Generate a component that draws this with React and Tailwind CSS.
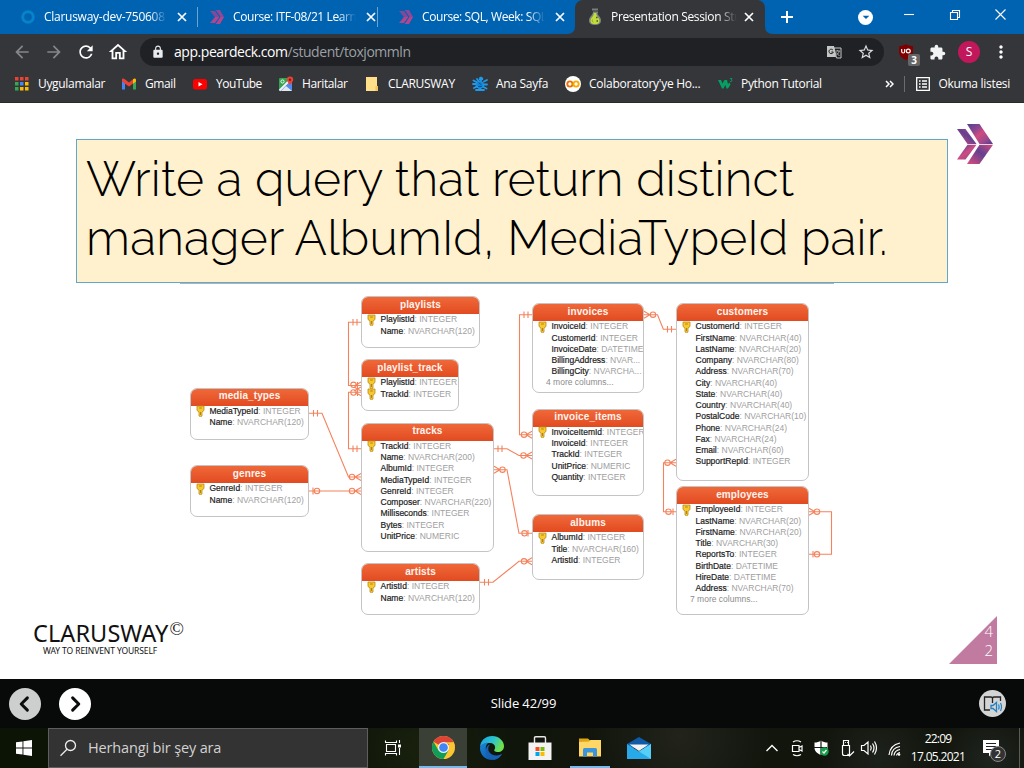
import React from "react";
import { MdArrowBack, MdArrowForward, MdRefresh, MdOutlineHome, MdLock, MdStarBorder, MdExtension, MdMoreVert, MdArrowDropDown } from "react-icons/md";

const UI = "font-['Open_Sans','Noto_Sans',sans-serif]";

function CloseX({ className = "" }) {
  return (
    <svg viewBox="0 0 10 10" className={`size-[10px] shrink-0 ${className}`} stroke="#fff" strokeWidth="1.7">
      <path d="M1 1l8 8M9 1l-8 8" />
    </svg>
  );
}

function Chevrons({ className }) {
  return (
    <svg viewBox="0 0 36 40" className={className}>
      <defs>
        <linearGradient id="cwA" x1="0" y1="0" x2="1" y2="1">
          <stop offset="0" stopColor="#54408f" />
          <stop offset=".3" stopColor="#8a4790" />
          <stop offset=".5" stopColor="#d04b80" />
          <stop offset=".75" stopColor="#a04a8c" />
          <stop offset="1" stopColor="#4b3b92" />
        </linearGradient>
        <linearGradient id="cwB" x1="1" y1="0" x2="0" y2="1">
          <stop offset="0" stopColor="#d04b80" />
          <stop offset=".45" stopColor="#64408f" />
          <stop offset="1" stopColor="#dd4c7c" />
        </linearGradient>
      </defs>
      <path d="M10 0h12.500L36 20H22.500z" fill="url(#cwA)" />
      <path d="M10 40h12.500L36 20.700H22.500z" fill="url(#cwB)" />
      <path d="M0 5h8.500L19.500 20H10.500z" fill="url(#cwB)" />
      <path d="M0 35.500h8.500L19.500 20.700H10.500z" fill="url(#cwA)" />
    </svg>
  );
}

function TabChevrons() {
  return (
    <svg viewBox="0 0 16 16" className="size-4">
      <path d="M1 2h5l4.500 6H6z" fill="#7f4a9b" />
      <path d="M6 8h4.500L6 14H1z" fill="#b04590" />
      <path d="M6.500 1h4.500l4 7h-3.800z" fill="#8f4797" />
      <path d="M11.200 8H15l-4 7H6.500z" fill="#b8458c" />
      <path d="M6.500 1.300L11 8l-4.500 6.700" fill="none" stroke="#0063b1" strokeWidth=".8" />
    </svg>
  );
}

function Pear() {
  return (
    <svg viewBox="0 0 16 18" className="h-[18px] w-4">
      <path d="M5 1.500h6M6 4.500h5" stroke="#77807a" strokeWidth="2" />
      <path d="M6 4h4c0 3 4 4.500 4 8.500C14 16 11 17 8 17s-6-1-6-4.500C2 8.500 6 7 6 4z" fill="#7d8583" />
      <path d="M6.800 5h2.400c0 4 3.300 4.500 3.300 7.500S10.500 16 8 16s-4.500-.5-4.500-3.500S6.800 9 6.800 5z" fill="#c3dc3b" />
      <path d="M9 9.500h1.500M9.500 13H11" stroke="#3e5a1f" strokeWidth="1.300" />
      <path d="M5.500 11.500c-.6 1.500 0 2.500.8 3" stroke="#7fae2c" fill="none" />
    </svg>
  );
}

function Tab({ icon, title, tracking, divider }) {
  return (
    <div className="flex h-full w-[189px] shrink-0 items-center pl-[20px]">
      <span className="flex w-4 justify-center">{icon}</span>
      <span className={`ml-2 w-[123px] overflow-hidden whitespace-nowrap text-[12px] text-white [mask-image:linear-gradient(to_right,#000_86%,transparent)] ${tracking}`}>{title}</span>
      <CloseX className="ml-[10px]" />
      <span className={`ml-auto h-5 w-px ${divider ? "bg-[#6ba3d2]" : ""}`} />
    </div>
  );
}

function TabStrip() {
  return (
    <div className="flex h-[34px] items-center bg-[#0063b1]">
      <div className="flex h-full w-[198px] shrink-0">
        <Tab
          icon={<svg viewBox="0 0 16 16" className="size-4"><circle cx="8" cy="8" r="5.300" fill="none" stroke="#0583cb" strokeWidth="3" /></svg>}
          title="Clarusway-dev-750608 -"
          tracking="tracking-[-0.27px]"
        />
      </div>
      <div className="-ml-px h-5 w-px bg-[#6ba3d2]" />
      <div className="-ml-[9px] flex h-full">
        <Tab icon={<TabChevrons />} title="Course: ITF-08/21 Learn" tracking="tracking-[-0.4px]" divider />
        <Tab icon={<TabChevrons />} title="Course: SQL, Week: SQL" tracking="tracking-[-0.4px]" />
      </div>
      <div className="relative ml-[8px] flex h-full w-[190px] shrink-0 items-center rounded-t-lg bg-[#35363a] pl-[12px]">
        <svg viewBox="0 0 8 8" className="absolute bottom-0 -left-2 size-2"><path d="M8 0v8H0q8 0 8-8z" fill="#35363a" /></svg>
        <svg viewBox="0 0 8 8" className="absolute -right-2 bottom-0 size-2"><path d="M0 0v8h8q-8 0-8-8z" fill="#35363a" /></svg>
        <Pear />
        <span className="ml-2 w-[126px] overflow-hidden whitespace-nowrap text-[12px] tracking-[-0.34px] text-white [mask-image:linear-gradient(to_right,#000_84%,transparent)]">Presentation Session Student</span>
        <CloseX className="ml-[7px]" />
      </div>
      <svg viewBox="0 0 12 12" className="ml-[16px] size-3 shrink-0" stroke="#fff" strokeWidth="2"><path d="M6 0v12M0 6h12" /></svg>
      <span className="ml-auto flex size-[15px] items-center justify-center rounded-full bg-white">
        <MdArrowDropDown className="size-4 shrink-0 text-[#0063b1]" />
      </span>
      <svg viewBox="0 0 104 14" className="mr-[16px] mb-[6px] ml-[31px] h-[14px] w-[104px] shrink-0" fill="none" stroke="#fff" strokeWidth="1.100">
        <path d="M0 7.500h10" />
        <path d="M46.500 5.500h7v7h-7zM48.500 5.500v-2h7v7h-2" />
        <path d="M91.500 2.500l10 10M101.500 2.500l-10 10" />
      </svg>
    </div>
  );
}

function Toolbar() {
  return (
    <div className="flex h-9 items-center bg-[#35363a] pr-[14px] pl-[12px] text-white">
      <MdArrowBack className="size-5 text-[#86878a]" />
      <MdArrowForward className="ml-3 size-5 text-[#86878a]" />
      <MdRefresh className="ml-3 size-5" />
      <MdOutlineHome className="ml-[11px] size-[22px]" />
      <div className="ml-[11px] flex h-7 w-[744px] shrink-0 items-center rounded-full bg-[#202124] pr-[9px] pl-[11px]">
        <MdLock className="size-[14px] text-[#e8eaed]" />
        <span className="ml-[9px] pb-px text-[14px] whitespace-nowrap text-[#9aa0a6]">
          <span className="tracking-[-0.45px] text-white">app.peardeck.com</span>
          <span className="tracking-[-0.460px]">/student/toxjommln</span>
        </span>
        <span className="ml-auto flex w-[15px] items-center">
          <svg viewBox="0 0 15 14" className="h-[14px] w-[15px]">
            <path d="M0 1h7l2 11H0z" fill="#c4c7c5" />
            <path d="M7 3h7v10H9.500z" fill="none" stroke="#c4c7c5" />
            <path d="M6 5.200a2.200 2.200 0 1 0 .3 1.800H4.300" fill="none" stroke="#202124" />
            <path d="M8.500 6H13M10.700 5v1M12.300 6c-.5 2-1.500 3-3 4M9.500 7.500c.6 1.500 1.500 2.500 3 3" fill="none" stroke="#c4c7c5" strokeWidth=".8" />
          </svg>
        </span>
        <MdStarBorder className="ml-[15px] size-[18px] text-[#dadce0]" />
      </div>
      <span className="relative ml-[14px] flex size-4 items-center justify-center">
        <svg viewBox="0 0 16 16" className="size-4">
          <path d="M8 0c2 1.500 4.500 2 7 2v6c0 4-3.500 6.500-7 8-3.500-1.500-7-4-7-8V2c2.500 0 5-.5 7-2z" fill="#800000" />
          <path d="M3.700 5v2.500q0 1.500 1.500 1.500t1.500-1.500V5" fill="none" stroke="#fff" strokeWidth="1.200" />
          <circle cx="10.300" cy="7" r="1.900" fill="none" stroke="#fff" strokeWidth="1.200" />
        </svg>
        <span className={`absolute top-[10px] left-[10px] flex h-3 w-3 items-center justify-center rounded-[2px] bg-[#666] text-[10px] font-bold ${UI}`}>3</span>
      </span>
      <MdExtension className="ml-[15px] size-[17px] shrink-0 text-[#f1f3f4]" />
      <span className="ml-[12px] flex size-[22px] shrink-0 items-center justify-center rounded-full bg-[#c2185b] text-[12px]">S</span>
      <MdMoreVert className="-mr-[4px] ml-[11px] size-5 shrink-0" />
    </div>
  );
}

const bookmarks = [
  { label: "Uygulamalar", box: "w-[107px]", tracking: "tracking-[-0.32px]", icon: "apps" },
  { label: "Gmail", box: "w-[71px]", tracking: "tracking-[-0.4px]", icon: "gmail" },
  { label: "YouTube", box: "w-[86px]", tracking: "tracking-[-0.5px]", icon: "youtube" },
  { label: "Haritalar", box: "w-[86px]", tracking: "tracking-[-0.38px]", icon: "maps" },
  { label: "CLARUSWAY", box: "w-[108px]", tracking: "tracking-[-0.3px]", icon: "folder" },
  { label: "Ana Sayfa", box: "w-[93px]", tracking: "tracking-[-0.3px]", icon: "figure" },
  { label: "Colaboratory'ye Ho...", box: "w-[152px]", tracking: "tracking-[-0.27px]", icon: "colab" },
  { label: "Python Tutorial", box: "w-[110px]", tracking: "tracking-[-0.33px]", icon: "w3" },
];

const appDots = ["#ea4335", "#ea4335", "#ea4335", "#34a853", "#4285f4", "#fbbc05", "#34a853", "#fbbc05", "#fbbc05"];

function BookmarkIcon({ name }) {
  return (
    <svg viewBox="0 0 16 16" className="size-4 shrink-0">
      {name === "apps" && appDots.map((c, i) => <rect key={i} x={1 + (i % 3) * 5} y={1 + Math.floor(i / 3) * 5} width="3.500" height="3.500" fill={c} />)}
      {name === "gmail" && (
        <g>
          <path d="M1 3.500v10h3V7z" fill="#4285f4" />
          <path d="M12 7v6.500h3v-10z" fill="#34a853" />
          <path d="M1 3.500C1 2.500 2.500 2 3.500 3L8 6.400 12 3.200V7.600L8 10.500 1 5.500z" fill="#ea4335" />
          <path d="M12 3.200c1.500-1.200 3-.7 3 .8v1.500l-3 2.200z" fill="#fbbc04" />
        </g>
      )}
      {name === "youtube" && (
        <g>
          <rect x="1" y="3" width="14" height="10.500" rx="2.500" fill="#f00" />
          <path d="M6.500 6v4.500l4-2.250z" fill="#fff" />
        </g>
      )}
      {name === "maps" && (
        <g>
          <rect x="1" y="2" width="13" height="13" rx="1" fill="#35a352" />
          <path d="M1 14L11 4l3 3v8H2z" fill="#4f8bf5" />
          <path d="M1.500 14.500L12 4" stroke="#f2f2f2" strokeWidth="2" />
          <path d="M3 15l5-5 6 5z" fill="#e4e6e8" />
          <circle cx="4.500" cy="5.500" r="1.600" fill="none" stroke="#fff" strokeWidth=".9" />
          <path d="M12 .5a3.200 3.200 0 0 1 3.200 3.200c0 2.300-2.400 3-3.200 6-.8-3-3.200-3.700-3.200-6A3.200 3.200 0 0 1 12 .5z" fill="#ea4335" />
          <circle cx="12" cy="3.800" r="1.200" fill="#8a1b12" />
        </g>
      )}
      {name === "folder" && (
        <g>
          <path d="M2 1h11v8.500l1 2V15H2z" fill="#ffe08a" />
          <path d="M11.500 10h2.500v5h-2.500z" fill="#f1c55a" />
        </g>
      )}
      {name === "figure" && (
        <g fill="none" stroke="#1e9bea" strokeLinecap="round">
          <path d="M4.500 6.500L8 5l3 1.500.5 4L8 13l-3.500-2z" fill="#1583d4" strokeWidth="1" />
          <circle cx="9" cy="2.800" r="1.700" fill="#1e9bea" />
          <path d="M1.500 4.500l3 1.500M1 8h3M2 12l3-1.500M12 5.500l3-1.500M12 8.500h3M11.500 11l3 1.500M5 3l1.500 2M4 14h8" strokeWidth="1.800" />
          <path d="M7 7l2 1.500M6.500 10.500h3" stroke="#0b4f95" strokeWidth="1" />
        </g>
      )}
      {name === "colab" && (
        <g>
          <circle cx="8" cy="8" r="8" fill="#fff" />
          <circle cx="4.900" cy="8" r="2.600" fill="none" stroke="#e8710a" strokeWidth="1.900" />
          <circle cx="11.100" cy="8" r="2.600" fill="none" stroke="#f9ab00" strokeWidth="1.900" />
        </g>
      )}
      {name === "w3" && (
        <g fill="none" stroke="#069e63">
          <path d="M1 4h3l1.500 3.500L7.500 4h2.500l1 4 1.500-1.500 1 2L11 12.500H9.500L8.300 9l-1.800 3.500H5z" fill="#069e63" stroke="none" />
          <path d="M13 2.500h2L14 4c1.500 0 1.300 2-1 1.500" strokeWidth=".9" />
        </g>
      )}
    </svg>
  );
}

function BookmarksBar() {
  return (
    <div className="flex h-[33px] items-center border-b border-[#28292b] bg-[#35363a] pr-[14px] pb-[5px] pl-[14px] text-[12px] whitespace-nowrap text-white">
      {bookmarks.map((b) => (
        <div key={b.label} className={`flex shrink-0 items-center gap-2 ${b.box}`}>
          <BookmarkIcon name={b.icon} />
          <span className={b.tracking}>{b.label}</span>
        </div>
      ))}
      <svg viewBox="0 0 9 8" className="ml-auto h-2 w-[9px]" fill="none" stroke="#fff" strokeWidth="1.500"><path d="M1 1l3 3-3 3M5 1l3 3-3 3" /></svg>
      <span className="ml-[10px] h-4 w-px bg-[#6b6c70]" />
      <svg viewBox="0 0 14 14" className="mr-2 ml-[11px] size-[14px]" fill="none" stroke="#fff" strokeWidth="1.300">
        <path d="M.7.700h12.600v12.600H.7zM3 4h1.600M6 4h5M3 7h1.600M6 7h5M3 10h1.600M6 10h5" />
      </svg>
      <span className="tracking-[-0.3px]">Okuma listesi</span>
    </div>
  );
}

const V = (n) => `NVARCHAR(${n})`;
const tables = [
  { name: "playlists", place: "left-[361px] top-[13px] w-[119px] h-[52px]", keys: 1, rows: [["PlaylistId", "INTEGER"], ["Name", V(120)]] },
  { name: "playlist_track", place: "left-[361px] top-[76px] w-[98px] h-[52px]", keys: 2, rows: [["PlaylistId", "INTEGER"], ["TrackId", "INTEGER"]] },
  { name: "media_types", place: "left-[190px] top-[104.500px] w-[119px] h-[52px]", keys: 1, rows: [["MediaTypeId", "INTEGER"], ["Name", V(120)]] },
  { name: "genres", place: "left-[190px] top-[182px] w-[119px] h-[52px]", keys: 1, rows: [["GenreId", "INTEGER"], ["Name", V(120)]] },
  { name: "tracks", place: "left-[361px] top-[139.500px] w-[133px] h-[129px]", keys: 1, rows: [["TrackId", "INTEGER"], ["Name", V(200)], ["AlbumId", "INTEGER"], ["MediaTypeId", "INTEGER"], ["GenreId", "INTEGER"], ["Composer", V(220)], ["Milliseconds", "INTEGER"], ["Bytes", "INTEGER"], ["UnitPrice", "NUMERIC"]] },
  { name: "artists", place: "left-[361px] top-[280px] w-[119px] h-[52px]", keys: 1, rows: [["ArtistId", "INTEGER"], ["Name", V(120)]] },
  { name: "invoices", place: "left-[532px] top-[20px] w-[112px] h-[90px]", keys: 1, rows: [["InvoiceId", "INTEGER"], ["CustomerId", "INTEGER"], ["InvoiceDate", "DATETIME"], ["BillingAddress", "NVAR..."], ["BillingCity", "NVARCHA..."]], more: "4 more columns..." },
  { name: "invoice_items", place: "left-[532px] top-[125.500px] w-[112px] h-[87px]", keys: 1, rows: [["InvoiceItemId", "INTEGER"], ["InvoiceId", "INTEGER"], ["TrackId", "INTEGER"], ["UnitPrice", "NUMERIC"], ["Quantity", "INTEGER"]] },
  { name: "albums", place: "left-[532px] top-[231px] w-[112px] h-[66px]", keys: 1, rows: [["AlbumId", "INTEGER"], ["Title", V(160)], ["ArtistId", "INTEGER"]] },
  { name: "customers", place: "left-[676px] top-[20px] w-[133px] h-[178px]", keys: 1, rows: [["CustomerId", "INTEGER"], ["FirstName", V(40)], ["LastName", V(20)], ["Company", V(80)], ["Address", V(70)], ["City", V(40)], ["State", V(40)], ["Country", V(40)], ["PostalCode", V(10)], ["Phone", V(24)], ["Fax", V(24)], ["Email", V(60)], ["SupportRepId", "INTEGER"]] },
  { name: "employees", place: "left-[676px] top-[203px] w-[133px] h-[129px]", keys: 1, rows: [["EmployeeId", "INTEGER"], ["LastName", V(20)], ["FirstName", V(20)], ["Title", V(30)], ["ReportsTo", "INTEGER"], ["BirthDate", "DATETIME"], ["HireDate", "DATETIME"], ["Address", V(70)]], more: "7 more columns..." },
];

function Key() {
  return (
    <svg viewBox="0 0 9 12" className="h-3 w-[9px] shrink-0">
      <path d="M1 1h7v4.500L6 7v4l-1.500.8L3 11V7L1 5.500z" fill="#f8c92c" stroke="#b98a1d" strokeWidth=".8" />
      <path d="M3.200 3h2.600M4.500 7v3" stroke="#a87b18" strokeWidth=".9" />
    </svg>
  );
}

function TableNode({ name, place, keys, rows, more }) {
  return (
    <div className={`absolute overflow-hidden rounded-[7px] border border-[#c4c4c4] bg-white ${place}`}>
      <div className="-mx-px -mt-px flex h-[18px] items-center justify-center bg-linear-to-b from-[#f06a3a] to-[#e24a20] pb-[2px] text-[10px] font-bold tracking-[0.1px] text-[#fff3ee]">{name}</div>
      {rows.map(([col, type], i) => (
        <div key={col} className="flex h-[11.250px] items-center text-[8.500px] whitespace-nowrap">
          <span className="flex w-[18.500px] shrink-0 justify-center">{i < keys && <Key />}</span>
          <span className="text-[#222] [-webkit-text-stroke:0.200px_#222]">{col}</span>
          <span className="text-[#a0a0a0]">: {type}</span>
        </div>
      ))}
      {more && <div className="h-[11.250px] pl-[13px] text-[8.500px] leading-[11.250px] text-[#8c8c8c]">{more}</div>}
    </div>
  );
}

const links = [
  "M361 39.300H348.500V102.500H361M353 36v6.500M357 36v6.500",
  "M361 165.700H348.500V109.300H361M353 162.500v6.500M357 162.500v6.500M357.500 99v14",
  "M355 102.500l6-3.500M355 109.300l6 3.500M354 104l7 4M354 108l7-4",
  "M309 130.300H322L348.500 194H361M313.500 127v6.500M317.500 127v6.500M355 194l6-3.500M355 194l6 3.500",
  "M309 208H361M313 204.500v7M355 208l6-3.500M355 208l6 3.500",
  "M494 165.700H507L519 172.500H532M498 162.500v6.500M502 162.500v6.500M526 172.500l6-3.500M526 172.500l6 3.500",
  "M494 186.700H507L519 250.300H532M500 186.700l-6-3.500M500 186.700l-6 3.500M528 247v6.500",
  "M480 299.300H493L519 278.300H532M484.500 296v6.500M488.500 296v6.500M526 278.300l6-3.500M526 278.300l6 3.500",
  "M532 31.700H519.500V151.700H532M524 28.500v6.500M528 28.500v6.500M526 151.700l6-3.500M526 151.700l6 3.500",
  "M644 31.700H657.500L663.300 46.300H676M667.500 43v6.500M671.500 43v6.500M650 31.700l-6-3.500M650 31.700l-6 3.500",
  "M676 179.700H663.500V228.700H676M670 179.700l6-3.500M670 179.700l6 3.500M673 225.500v6.500",
  "M809 228.700H831.500V271.300H809M815 228.700l-6-3.500M815 228.700l-6 3.500M813 268v6.500",
];
const rings = [[353.500, 101.800], [353.500, 109.500], [352, 194], [317, 208], [352, 208], [523.500, 172.500], [502.500, 186.700], [524.500, 250.300], [524, 278.300], [524, 151.700], [653, 31.700], [667.500, 179.700], [668.500, 228.700], [817, 228.700], [817, 271.300]];

function Diagram() {
  return (
    <div className="relative h-[333px] w-full font-['Liberation_Sans',Arial,sans-serif]">
      <div className="absolute top-0 left-[180px] h-px w-[654px] bg-[#b4b4b4]" />
      <svg viewBox="0 0 1024 333" className="absolute inset-0 h-[333px] w-[1024px]" fill="none" stroke="#f4825c" strokeWidth="1.100">
        {links.map((d) => <path key={d} d={d} />)}
        {rings.map(([x, y]) => <circle key={`${x}-${y}`} cx={x} cy={y} r="2.700" />)}
      </svg>
      {tables.map((t) => <TableNode key={t.name} {...t} />)}
    </div>
  );
}

function Slide() {
  return (
    <div className="flex h-[576px] flex-col bg-white">
      <div className="flex h-[180px] items-end pl-[76px]">
        <div className="flex h-[144px] w-[872px] flex-col border border-[#5fa8cc] bg-[#fff0ce] pt-[10px] pl-[9px] font-['Raleway','Lato',sans-serif] text-[48px] leading-[59px] font-light whitespace-nowrap text-black">
          <div className="tracking-[0.16px]">Write a query that return distinct</div>
          <div className="tracking-[0.24px]">manager AlbumId, MediaTypeId pair.</div>
        </div>
        <Chevrons className="mb-[119px] ml-[9px] h-10 w-9" />
      </div>
      <Diagram />
      <div className="flex h-[63px] items-start justify-between pr-[27px] pl-[33px]">
        <div className="font-['Noto_Sans','Open_Sans',sans-serif] text-[#111]">
          <div className="flex items-start pt-[4px]">
            <span className="text-[23.500px] leading-[26px] tracking-[0.080px]">CLARUSWAY</span>
            <span className="ml-px font-['Liberation_Serif',serif] text-[19px] leading-[18px]">©</span>
          </div>
          <div className="pl-[10px] text-[8.500px] leading-[9px] tracking-[-0.1px] whitespace-nowrap">WAY TO REINVENT YOURSELF</div>
        </div>
        <div className="flex h-12 w-12 flex-col items-end bg-[#c27ba0] pt-[6px] pr-[4px] font-['Open_Sans',sans-serif] text-[15px] leading-[19px] font-light text-white [clip-path:polygon(100%_0,100%_100%,0_100%)]">
          <span>4</span>
          <span>2</span>
        </div>
      </div>
    </div>
  );
}

function Player() {
  return (
    <div className="grid h-[49px] grid-cols-3 items-center bg-[#080a0a] pr-[18px] pl-[9px] text-white">
      <div className="flex gap-[17.500px]">
        {["M19 10.500l-6.500 6.500 6.500 6.500", "M14 10.500l6.500 6.500-6.500 6.500"].map((d, i) => (
          <span key={d} className={`flex size-8 items-center justify-center rounded-full ${i ? "bg-white" : "bg-[#cdcfce]"}`}>
            <svg viewBox="0 0 33 34" className="size-8" fill="none" stroke="#0b0d0d" strokeWidth="3.200" strokeLinecap="round" strokeLinejoin="round"><path d={d} /></svg>
          </span>
        ))}
      </div>
      <span className="pl-[32px] text-center text-[13px] tracking-[-0.120px]">Slide 42/99</span>
      <span className="flex size-[27px] items-center justify-center justify-self-end rounded-full bg-[#d4d4d4]">
        <svg viewBox="0 0 20 18" className="h-[18px] w-5" fill="none">
          <path d="M7 15H1.500V2H8q1.500 0 1.500 1.500V8M9.500 3.500Q9.500 2 11 2h6.500v4" stroke="#222" strokeWidth="1.300" />
          <path d="M8 10.500h2l3.500-3v9l-3.500-3H8z" stroke="#2181c4" strokeWidth="1.300" />
          <path d="M15.500 9.500q1.200 2.500 0 5M17.500 8q2 4 0 8" stroke="#2181c4" strokeWidth="1.200" />
        </svg>
      </span>
    </div>
  );
}

function ChromeLogo() {
  return (
    <svg viewBox="0 0 48 48" className="size-[23px]">
      <circle cx="24" cy="24" r="24" fill="#fbc62f" />
      <path d="M24 24L3.200 12A24 24 0 0 1 44.800 12z" fill="#db4437" />
      <path d="M44.800 12H24v12z" fill="#db4437" />
      <path d="M3.200 12A24 24 0 0 0 24 48L34.400 30 24 24 13.600 30z" fill="#109d58" />
      <path d="M24 13h20.800q2 3.500 2.800 8z" fill="#fbc62f" />
      <circle cx="24" cy="24" r="11.500" fill="#f1f1f1" />
      <circle cx="24" cy="24" r="9" fill="#4285f4" />
    </svg>
  );
}

function EdgeLogo() {
  return (
    <svg viewBox="0 0 24 24" className="size-6">
      <defs>
        <linearGradient id="edgeTop" x1="0" y1="0" x2="1" y2=".4"><stop offset="0" stopColor="#1e9de0" /><stop offset=".55" stopColor="#29c3d2" /><stop offset="1" stopColor="#6fe04d" /></linearGradient>
        <linearGradient id="edgeLow" x1="0" y1="0" x2="1" y2="1"><stop offset="0" stopColor="#1b86d8" /><stop offset="1" stopColor="#0d4c9a" /></linearGradient>
      </defs>
      <path d="M0 12C0 4 6 0 12 0c7 0 12 5 12 10 0 4-3 6-6 6s-4.500-1.200-3.500-2.500c1.500-2 .5-6-4-6.500C5 6.500 0 9 0 12z" fill="url(#edgeTop)" />
      <path d="M0 12c0-3 4-5.500 8.500-5.200C6 8.500 5 12 6.500 15.500c2 4.500 8 6 14.500 3.300C19 22 15.500 24 12 24 5 24 0 18.500 0 12z" fill="url(#edgeLow)" />
      <path d="M10 8.500c-3 3-2 8 2 10 3 1.500 7 1.300 10-.8-1 3.300-5 6-8.500 6C8 22.500 5 18 6 13c.5-2.500 2-4 4-4.500z" fill="#1561b5" />
    </svg>
  );
}

function Taskbar() {
  return (
    <div className="flex h-10 items-stretch bg-[#0c0f08] bg-[radial-gradient(circle_at_880px_28px,#1d211b_0,transparent_60px),radial-gradient(circle_at_990px_30px,#20241f_0,transparent_50px),radial-gradient(circle_at_680px_8px,#22241c_0,transparent_90px),radial-gradient(circle_at_420px_20px,#18200d_0,transparent_90px),linear-gradient(to_right,#0b1405,#11150c_60%,#11150d)] text-white">
      <div className="flex w-12 shrink-0 items-center justify-center">
        <svg viewBox="0 0 16 16" className="size-4" fill="#fff"><path d="M0 2.300L6.500 1.400v6.200H0zM7.400 1.300L16 0v7.600H7.400zM0 8.400h6.500v6.200L0 13.700zM7.400 8.400H16V16l-8.600-1.300z" /></svg>
      </div>
      <div className="flex w-80 shrink-0 items-center border border-[#5e5e5e] bg-[#333] pl-[10px]">
        <svg viewBox="0 0 18 18" className="size-[18px]" fill="none" stroke="#eee" strokeWidth="1.300"><circle cx="11.500" cy="6.500" r="5" /><path d="M8 10.200L1.500 16.700" /></svg>
        <span className="ml-[11px] text-[14.500px] tracking-[-0.15px] text-[#d2d2d2]">Herhangi bir şey ara</span>
      </div>
      <div className="flex w-[51px] shrink-0 items-center justify-center pl-[1px]">
        <svg viewBox="0 0 18 18" className="mr-[3px] size-[18px]" fill="none" stroke="#fff" strokeWidth="1.100"><path d="M2.500 5.500h9v7h-9zM1.500 1.500v2h11v-2M1.500 16.500v-2h11v2M15.500 1v3M15.500 9v7" /><path d="M14 5.500h3v3h-3z" fill="#fff" stroke="none" /></svg>
      </div>
      <div className="flex w-12 shrink-0 items-center justify-center border-b-2 border-[#76b9ed] bg-[#3b4037]"><ChromeLogo /></div>
      <div className="flex w-[49px] shrink-0 items-center justify-center"><EdgeLogo /></div>
      <div className="flex w-12 shrink-0 items-center justify-center">
        <svg viewBox="0 0 24 24" className="size-6">
          <path d="M6.500 7V2q0-1.200 1.200-1.200h8.600q1.200 0 1.200 1.200v5" fill="none" stroke="#e8e8e8" strokeWidth="1.400" />
          <path d="M.5 6.500h23V24H.5z" fill="#f3f3f3" />
          <path d="M7.500 11h4v4h-4z" fill="#f25022" /><path d="M12.500 11h4v4h-4z" fill="#7fba00" /><path d="M7.500 16h4v4h-4z" fill="#00a4ef" /><path d="M12.500 16h4v4h-4z" fill="#ffb900" />
        </svg>
      </div>
      <div className="ml-[6px] flex w-10 shrink-0 items-center justify-center border-b-2 border-[#76b9ed]">
        <svg viewBox="0 0 22 19" className="h-[19px] w-[22px]">
          <path d="M0 .500h9l1.500 1.500H21v4H0z" fill="#e0a514" /><path d="M0 4l10-.5L12 2h10v16.500H0z" fill="#ffd766" />
          <path d="M4 18.500v-7q0-1.500 1.500-1.500h11q1.500 0 1.500 1.500v7h-4v-4H8v4z" fill="#3b95dc" />
        </svg>
      </div>
      <div className="flex w-[58px] shrink-0 items-center justify-center">
        <svg viewBox="0 0 24 23" className="h-[23px] w-6">
          <path d="M0 7L12 0l12 7v4H0z" fill="#0f5ba8" /><path d="M0 7l12 7.500L24 7v15H0z" fill="#27a9ea" /><path d="M24 7v15L12 14.500z" fill="#55cff7" />
          <path d="M2.500 7.500h19L12 14z" fill="#f2f2f2" />
        </svg>
      </div>
      <svg viewBox="0 0 142 24" className="mt-2 ml-[91px] h-6 w-[142px] shrink-0" fill="none" stroke="#fff" strokeWidth="1.200">
        <path d="M7.500 15l5.500-5.500 5.500 5.500" strokeWidth="1.400" />
        <path d="M33.500 9.500h6.500v6h-6.500zM40 11.500l3-1.500v5l-3-1.500M34 6q4-2.500 8 0M34 18.500q4 2.500 8 0" />
        <path d="M62 4.500c2 1.500 4 2 6.500 2v5c0 4-3 6-6.500 7.500-3.500-1.500-6.500-3.500-6.500-7.500v-5c2.500 0 4.500-.5 6.500-2z" fill="#fff" stroke="none" /><path d="M62 4v15M55 11.500h13" stroke="#171a12" />
        <circle cx="65.500" cy="15.500" r="4.200" fill="#13a04b" stroke="none" /><path d="M63.500 15.500l1.500 1.500 2.500-3" />
        <path d="M83.500 9.500h7v10h-5q-2 0-2-2zM84.500 9.500v-5h5v5M86 6.500h.8M88 6.500h.8M88.500 18l2 2 4.500-4.500" />
        <path d="M102.500 9.500h2.500l4-3.500v12l-4-3.500h-2.500zM111.500 9.500q1.500 2.500 0 5M113.500 7.500q3 4.500 0 9M115.500 5.500q4 6.500 0 13" />
        <path d="M130 19q1-10 11-12M132.500 19.500q.5-8 8.500-9M135 19.500q.5-5 6-6M137.500 19.500q.5-2.500 3.500-3" /><circle cx="140" cy="18.500" r="1.300" fill="#fff" stroke="none" />
      </svg>
      <div className="flex w-[74px] shrink-0 flex-col items-center justify-center text-[12px] leading-[18px] whitespace-nowrap">
        <span className="tracking-[-0.8px]">22:09</span>
        <span className="tracking-[-0.68px]">17.05.2021</span>
      </div>
      <div className="relative flex w-[45px] shrink-0 items-center border-r border-[#5a5c58] pl-[8px]">
        <svg viewBox="0 0 16 17" className="h-[17px] w-4"><path d="M0 0h16v13h-7l-3 3.500V13H0z" fill="#fff" /><path d="M3 3.500h10M3 6.500h10M3 9.500h10" stroke="#222" strokeWidth="1.200" /></svg>
        <span className="absolute top-[18px] left-[15px] flex size-4 items-center justify-center rounded-full border border-[#888] bg-[#333] text-[11px]">2</span>
      </div>
    </div>
  );
}

export default function App() {
  return (
    <div className={`h-[768px] w-[1024px] overflow-hidden ${UI}`}>
      <TabStrip />
      <Toolbar />
      <BookmarksBar />
      <Slide />
      <Player />
      <Taskbar />
    </div>
  );
}
